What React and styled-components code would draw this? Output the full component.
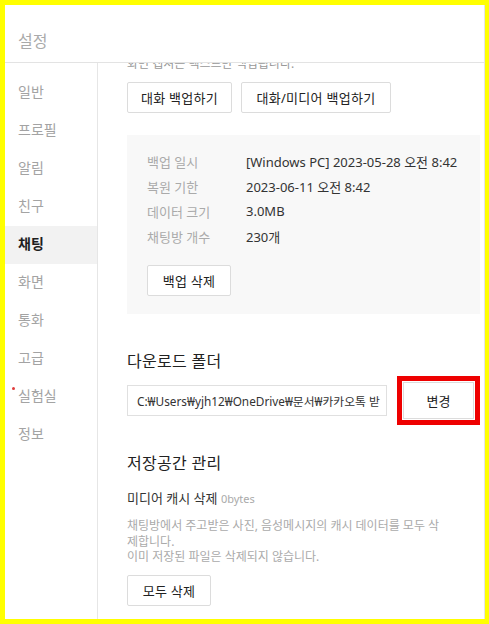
import styled, { createGlobalStyle } from "styled-components"

const GlobalStyle = createGlobalStyle`
  html, body {
    margin: 0;
    padding: 0;
    background: #ffff00;
  }
  * { box-sizing: border-box; }
  body {
    font-family: "Noto Sans", "Noto Sans CJK KR", sans-serif;
  }
`

const menu = ["일반", "프로필", "알림", "친구", "채팅", "화면", "통화", "고급", "실험실", "정보"]

const backupInfo = [
    ["백업 일시", "[Windows PC] 2023-05-28 오전 8:42"],
    ["복원 기한", "2023-06-11 오전 8:42"],
    ["데이터 크기", "3.0MB"],
    ["채팅방 개수", "230개"],
]

export default function App() {
    return (
        <>
            <GlobalStyle />
            <Frame>
                <Window>
                    <Header>설정</Header>
                    <Body>
                        <Sidebar>
                            {menu.map((m) => (
                                <MenuItem key={m} active={m === "채팅"} dot={m === "실험실"}>
                                    {m}
                                </MenuItem>
                            ))}
                        </Sidebar>
                        <Content>
                            <Scroller>
                                <Desc>
                                    대화 백업 시 사진, 동영상, 파일은 제외되며 텍스트 대화와
                                    <br />
                                    화면 캡쳐는 텍스트만 백업됩니다.
                                </Desc>
                                <ButtonRow>
                                    <Button width={105}>대화 백업하기</Button>
                                    <Button width={150}>대화/미디어 백업하기</Button>
                                </ButtonRow>
                                <InfoBox>
                                    {backupInfo.map(([label, value]) => (
                                        <InfoRow key={label}>
                                            <InfoLabel>{label}</InfoLabel>
                                            <InfoValue>{value}</InfoValue>
                                        </InfoRow>
                                    ))}
                                    <Button className="delete" width={84}>백업 삭제</Button>
                                </InfoBox>

                                <Title>다운로드 폴더</Title>
                                <FolderRow>
                                    <PathField>C:₩Users₩yjh12₩OneDrive₩문서₩카카오톡 받</PathField>
                                    <Highlight>
                                        <ChangeButton>변경</ChangeButton>
                                    </Highlight>
                                </FolderRow>

                                <Title className="storage">저장공간 관리</Title>
                                <SubTitle>
                                    미디어 캐시 삭제 <small>0bytes</small>
                                </SubTitle>
                                <Note>
                                    채팅방에서 주고받은 사진, 음성메시지의 캐시 데이터를 모두 삭
                                    <br />
                                    제합니다.
                                    <br />
                                    이미 저장된 파일은 삭제되지 않습니다.
                                </Note>
                                <Button className="clear" width={84}>모두 삭제</Button>
                            </Scroller>
                        </Content>
                    </Body>
                </Window>
            </Frame>
        </>
    )
}

const Frame = styled.div`
    width: 489px;
    height: 624px;
    padding: 5px 4px 5px 5px;
    background: #ffff00;
`

const Window = styled.div`
    width: 100%;
    height: 100%;
    background: #fff;
    display: flex;
    flex-direction: column;
    border-right: 1px solid #e4e4e4;
`

const Header = styled.div`
    height: 58px;
    flex-shrink: 0;
    border-bottom: 1px solid #e3e3e3;
    display: flex;
    align-items: center;
    padding: 12px 0 0 13px;
    font-size: 16px;
    color: #aaa;
`

const Body = styled.div`
    flex: 1;
    display: flex;
    min-height: 0;
`

const Sidebar = styled.div`
    width: 93px;
    flex-shrink: 0;
    border-right: 1px solid #e6e6e6;
    padding-top: 11px;
`

const MenuItem = styled.div`
    position: relative;
    height: 38px;
    display: flex;
    align-items: center;
    padding: 0 0 4px 13px;
    font-size: 14px;
    color: ${(p) => (p.active ? "#1e1e1e" : "#a3a3a3")};
    font-weight: ${(p) => (p.active ? 700 : 400)};
    background: ${(p) => (p.active ? "#f2f2f2" : "transparent")};
    &::before {
        content: "";
        display: ${(p) => (p.dot ? "block" : "none")};
        position: absolute;
        left: 7px;
        top: 9px;
        width: 3px;
        height: 3px;
        border-radius: 50%;
        background: #e03c3c;
    }
`

const Content = styled.div`
    flex: 1;
    overflow: hidden;
    padding-left: 29px;
`

const Scroller = styled.div`
    margin-top: -25px;
    width: 353px;
`

const Desc = styled.p`
    margin: 0;
    font-size: 12px;
    line-height: 17px;
    color: #999;
    white-space: nowrap;
`

const ButtonRow = styled.div`
    display: flex;
    gap: 9px;
    margin-top: 10px;
`

const Button = styled.button`
    height: 31px;
    width: ${(p) => p.width}px;
    padding: 0;
    border: 1px solid #dcdcdc;
    border-radius: 2px;
    background: #fff;
    font-family: inherit;
    font-size: 13px;
    letter-spacing: 0.3px;
    color: #222;
    &.delete {
        margin-top: 16px;
    }
    &.clear {
        margin-top: 10px;
    }
`

const InfoBox = styled.div`
    margin-top: 22px;
    background: #f8f8f8;
    padding: 14px 20px 18px;
`

const InfoRow = styled.div`
    display: flex;
    height: 25px;
    align-items: center;
    font-size: 13px;
    padding-bottom: 1px;
`

const InfoLabel = styled.span`
    width: 99px;
    color: #aaa;
`

const InfoValue = styled.span`
    color: #333;
`

const Title = styled.h2`
    margin: 35px 0 0;
    font-size: 16px;
    font-weight: 400;
    line-height: 24px;
    color: #222;
    letter-spacing: 0.3px;
    &.storage {
        margin-top: 26px;
    }
`

const FolderRow = styled.div`
    display: flex;
    align-items: center;
    gap: 10px;
    margin-top: 3px;
`

const PathField = styled.div`
    width: 260px;
    height: 31px;
    border: 1px solid #e0e0e0;
    padding: 0 9px;
    display: flex;
    align-items: center;
    font-size: 11.8px;
    color: #333;
    white-space: nowrap;
    overflow: hidden;
`

const Highlight = styled.div`
    width: 83px;
    height: 49px;
    border: 5px solid #ee0000;
    padding: 1px;
    display: flex;
`

const ChangeButton = styled.button`
    flex: 1;
    border: 1px solid #dcdcdc;
    background: #fff;
    font-family: inherit;
    font-size: 13px;
    color: #222;
`

const SubTitle = styled.div`
    margin-top: 14px;
    font-size: 13px;
    line-height: 18px;
    color: #333;
    small {
        font-size: 11px;
        color: #aaa;
    }
`

const Note = styled.p`
    margin: 10px 0 0;
    font-size: 12px;
    line-height: 15.5px;
    color: #aaa;
    white-space: nowrap;
`
